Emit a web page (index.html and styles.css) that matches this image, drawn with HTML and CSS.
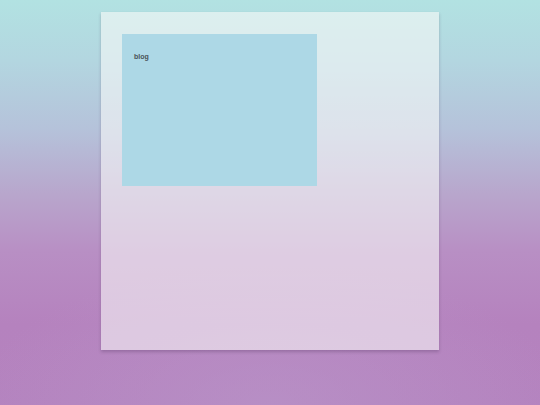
FILE: index.html
```html
<!DOCTYPE html>
<html>
<head>
<meta charset="utf-8">
<link rel="stylesheet" href="styles.css">
</head>
<body>
<div class="page">
  <div class="panel">
    <div class="card">
      <div class="label">blog</div>
    </div>
  </div>
</div>
</body>
</html>
```
FILE: styles.css
```css
html, body {
  margin: 0;
  padding: 0;
  width: 540px;
  height: 405px;
  overflow: hidden;
}
body {
  background:
    radial-gradient(ellipse 55% 35% at 50% 100%, rgba(186,152,202,0.55), rgba(186,152,202,0) 100%),
    linear-gradient(180deg, #b2e2e2 0%, #b3d6e0 15%, #b5c2da 32%, #b8a6cc 48%, #b88fc4 62%, #b582be 80%, #b483bf 100%);
}
.page {
  display: flex;
  justify-content: center;
  padding-top: 12px;
}
.panel {
  width: 338px;
  height: 338px;
  box-sizing: border-box;
  padding: 22px 22px 22px 21px;
  background: rgba(250, 250, 248, 0.58);
  box-shadow: 0 2px 3px rgba(60, 30, 70, 0.25);
}
.card {
  width: 195px;
  height: 152px;
  box-sizing: border-box;
  background: #add8e6;
  padding: 19px 12px 0;
}
.label {
  font-family: "Liberation Sans", sans-serif;
  font-size: 7px;
  line-height: 8px;
  font-weight: bold;
  color: #4a5458;
}
```
